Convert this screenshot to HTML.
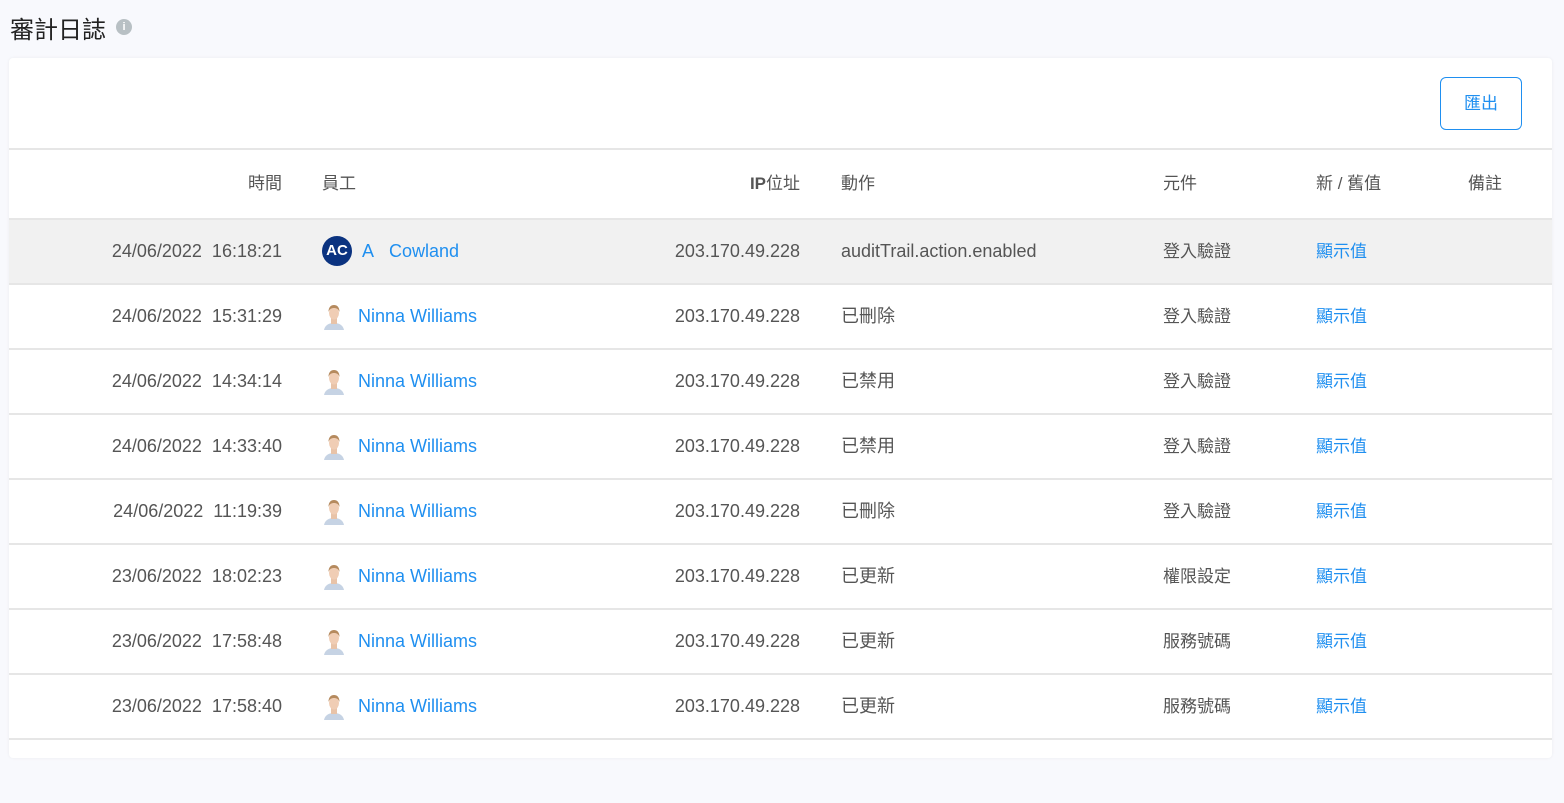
<!DOCTYPE html>
<html><head><meta charset="utf-8"><style>
body{margin:0;width:1564px;height:748px;overflow:hidden;background:#f8f9fd;font-family:"Liberation Sans","Noto Sans CJK TC",sans-serif;color:#555;font-size:17px}
.title{position:absolute;left:10px;top:10px;font-size:24px;color:#222;font-family:"Liberation Sans","Noto Sans CJK TC",sans-serif}
.info{position:absolute;left:116px;top:19px;width:16px;height:16px;border-radius:50%;background:#b8c0c4;color:#fff;font-size:11px;font-weight:bold;text-align:center;line-height:16px}
.card{position:absolute;left:9px;top:58px;width:1543px;height:700px;background:#fff;border-radius:4px;box-shadow:0 0 3px rgba(0,0,0,.06)}
.btn{position:absolute;left:1431px;top:19px;width:80px;height:51px;border:1px solid #1f8ff0;border-radius:6px;color:#1f8ff0;font-size:17px;text-align:center;line-height:51px}
.row{position:absolute;left:0;width:1543px;height:63px;border-top:2px solid #e6e6e6;font-size:18px}
.row div{position:absolute;top:0;line-height:63px;white-space:nowrap}
.t{right:1270px}.ip{right:752px}.a{left:832px}.c{left:1154px;font-size:17px}.v{left:1307px;color:#1f8ff0;font-size:17px}.e{left:313px;color:#1f8ff0}
.hd div{color:#555;font-size:17px}
.av{position:absolute;top:18px;left:313px;width:28px;height:28px}
</style></head><body>
<div class="title">審計日誌</div><div class="info">i</div>
<div class="card">
<div class="btn">匯出</div>
<div class="row hd" style="top:90px;height:68px"><div class="t" style="line-height:68px">時間</div><div class="e" style="color:#555;line-height:68px">員工</div><div class="ip" style="line-height:68px"><b>IP</b>位址</div><div class="a" style="line-height:68px">動作</div><div class="c" style="line-height:68px">元件</div><div style="left:1307px;line-height:68px">新 / 舊值</div><div style="left:1459px;line-height:68px">備註</div></div>
<div class="row" style="top:160px;background:#f1f1f1"><div class="t">24/06/2022&nbsp;&nbsp;16:18:21</div><div style="left:313px;top:16px;width:30px;height:30px;border-radius:50%;background:#0b3380;color:#fff;font-size:15px;font-weight:bold;line-height:30px;text-align:center">AC</div><div class="e" style="left:353px">A&nbsp;&nbsp;&nbsp;Cowland</div><div class="ip">203.170.49.228</div><div class="a">auditTrail.action.enabled</div><div class="c">登入驗證</div><div class="v">顯示值</div></div>
</div>
<script>
var d=[["24/06/2022&nbsp;&nbsp;15:31:29","已刪除","登入驗證"],["24/06/2022&nbsp;&nbsp;14:34:14","已禁用","登入驗證"],["24/06/2022&nbsp;&nbsp;14:33:40","已禁用","登入驗證"],["24/06/2022&nbsp;&nbsp;11:19:39","已刪除","登入驗證"],["23/06/2022&nbsp;&nbsp;18:02:23","已更新","權限設定"],["23/06/2022&nbsp;&nbsp;17:58:48","已更新","服務號碼"],["23/06/2022&nbsp;&nbsp;17:58:40","已更新","服務號碼"],["","",""]];
var c=document.querySelector('.card'),h='';
var av='<svg class="av" viewBox="0 0 28 28" style="position:absolute;left:311px;top:17px;width:28px;height:28px"><path d="M4 28c1-5 5-7 10-7s9 2 10 7z" fill="#c6d3e4"/><rect x="11" y="16" width="6" height="6" fill="#e8c3a8"/><ellipse cx="14" cy="11" rx="5" ry="6.5" fill="#f0cdb4"/><path d="M8.5 10c0-5 2.5-7 5.5-7s5.5 2 5.5 7c-1-3-3-4-5.5-4s-4.5 1-5.5 4z" fill="#b58a5e"/></svg>';
d.forEach(function(r,i){h+='<div class="row" style="top:'+(225+i*65)+'px">'+(r[0]?'<div class="t">'+r[0]+'</div>'+av+'<div class="e" style="left:349px">Ninna Williams</div><div class="ip">203.170.49.228</div><div class="a">'+r[1]+'</div><div class="c">'+r[2]+'</div><div class="v">顯示值</div>':'')+'</div>'});
c.insertAdjacentHTML('beforeend',h);
</script>
</body></html>
